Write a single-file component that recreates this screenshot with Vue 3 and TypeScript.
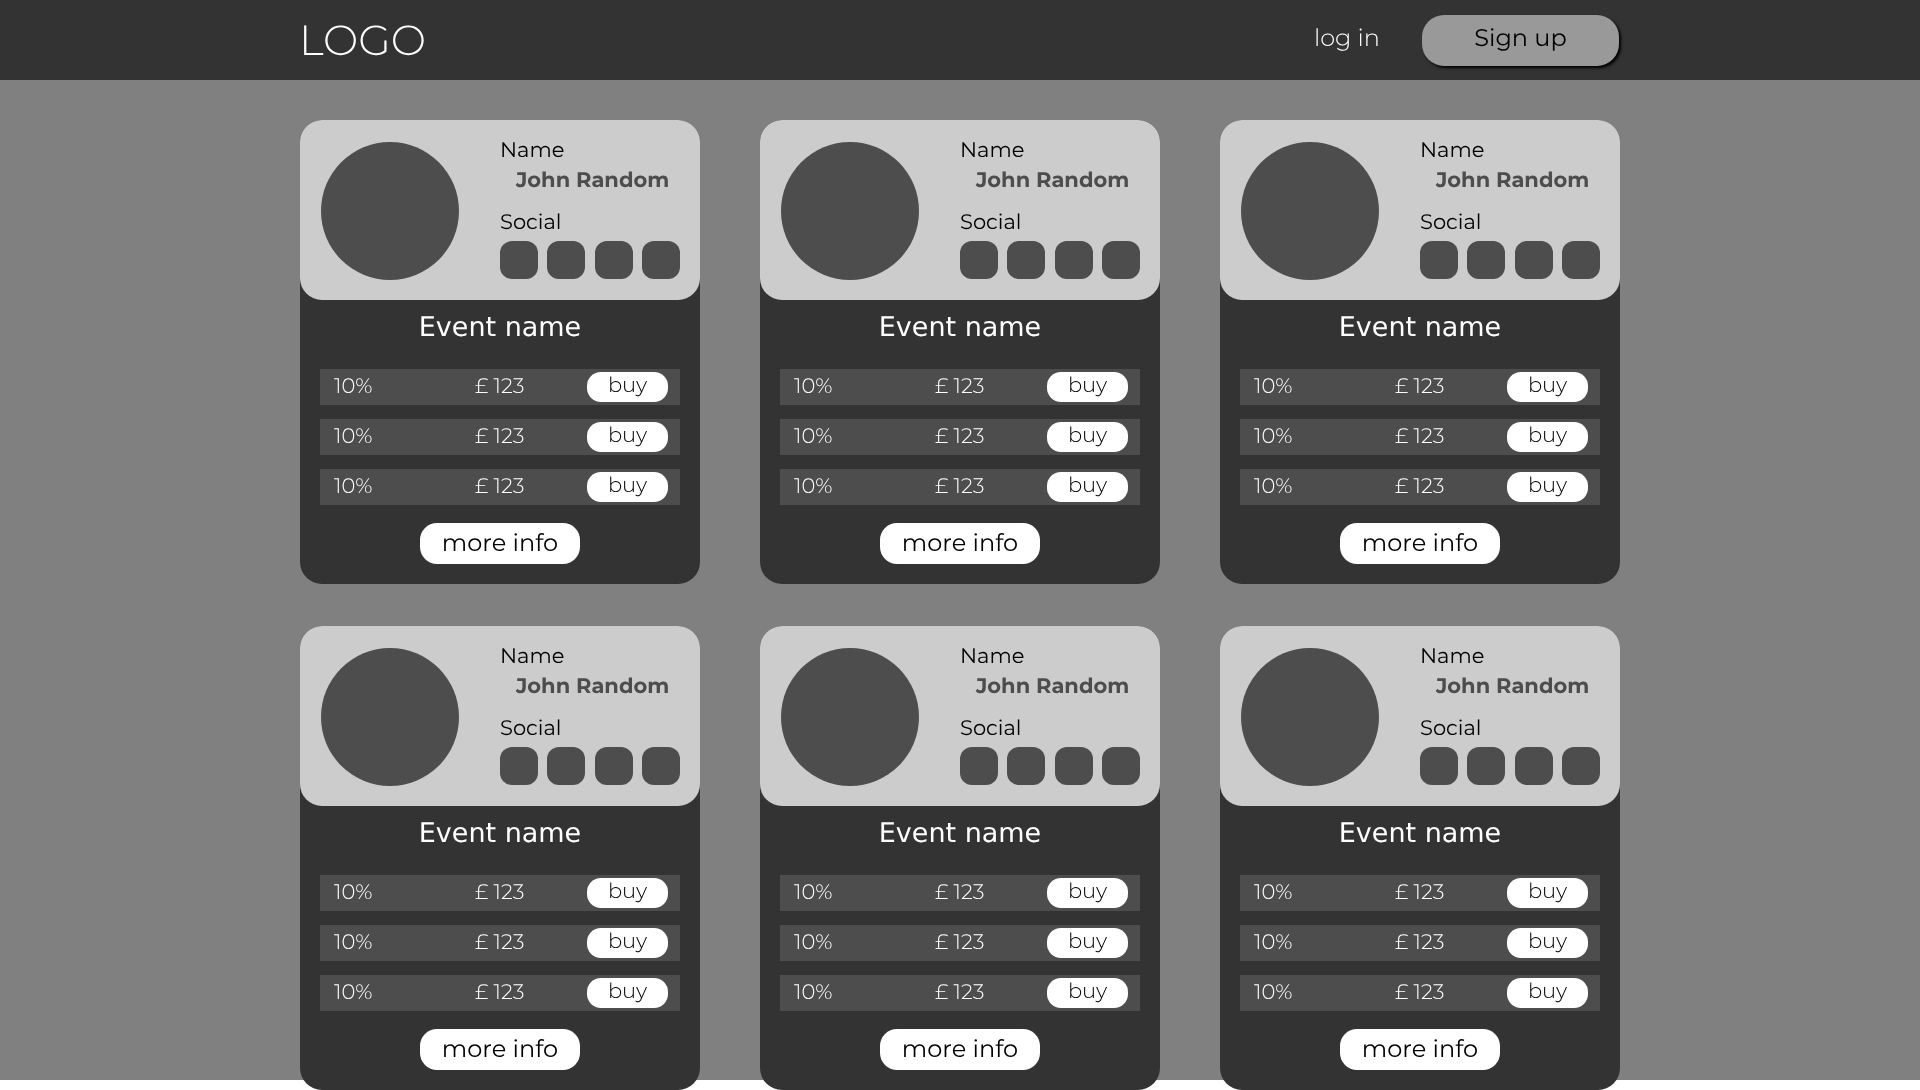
<script setup lang="ts">
interface Offer {
  discount: string
  price: string
}

interface EventCard {
  id: number
  host: string
  title: string
  offers: Offer[]
}

const socialLinks: number[] = [1, 2, 3, 4]

const cards: EventCard[] = Array.from({ length: 6 }, (_, index) => ({
  id: index + 1,
  host: 'John Random',
  title: 'Event name',
  offers: Array.from({ length: 3 }, () => ({ discount: '10%', price: '£ 123' })),
}))
</script>

<template>
  <div class="page">
    <header class="topbar">
      <div class="container topbar-inner">
        <a class="logo" href="#">LOGO</a>
        <nav class="account">
          <a class="login" href="#">log in</a>
          <button class="signup" type="button">Sign up</button>
        </nav>
      </div>
    </header>

    <main class="content">
      <div class="container grid">
        <article v-for="card in cards" :key="card.id" class="card">
          <div class="profile">
            <div class="avatar"></div>
            <div class="details">
              <div class="label">Name</div>
              <div class="host">{{ card.host }}</div>
              <div class="label">Social</div>
              <div class="socials">
                <a v-for="link in socialLinks" :key="link" class="social" href="#"></a>
              </div>
            </div>
          </div>

          <h2 class="title">{{ card.title }}</h2>

          <table class="offers">
            <tbody>
              <tr v-for="(offer, index) in card.offers" :key="index">
                <td class="discount">{{ offer.discount }}</td>
                <td class="price">{{ offer.price }}</td>
                <td class="action"><button class="buy" type="button">buy</button></td>
              </tr>
            </tbody>
          </table>

          <button class="more" type="button">more info</button>
        </article>
      </div>
    </main>
  </div>
</template>

<style>
body {
  margin: 0;
  background: #fff;
}
</style>

<style scoped>
.page {
  font-family: Montserrat, Inter, "Open Sans", sans-serif;
  font-weight: 300;
  text-rendering: geometricPrecision;
  will-change: transform;
}

button {
  padding: 0;
  border: 0;
  font: inherit;
  text-rendering: inherit;
  cursor: pointer;
}

a {
  color: inherit;
  text-decoration: none;
}

.container {
  box-sizing: border-box;
  width: 100%;
  max-width: 1320px;
  margin: 0 auto;
}

.topbar {
  padding-right: 2px;
  background: #333;
  color: #fff;
}

.topbar-inner {
  display: flex;
  align-items: center;
  justify-content: space-between;
  height: 80px;
}

.logo {
  font-size: 42px;
  line-height: 48px;
}

.account {
  display: flex;
  align-items: center;
  gap: 42px;
  font-size: 24px;
}

.login {
  padding-bottom: 3px;
}

.signup {
  width: 197px;
  height: 51px;
  padding-bottom: 3px;
  border-radius: 22px;
  background: #999;
  box-shadow: 2px 2px 3px #000;
  color: #000;
  font-weight: 400;
}

/* The last row of cards hangs over the lower edge of the grey area. */
.content {
  padding-top: 40px;
  background: linear-gradient(#808080, #808080) no-repeat 0 0 / 100% calc(100% - 10px);
}

.grid {
  display: grid;
  grid-template-columns: repeat(auto-fit, 400px);
  justify-content: space-between;
  gap: 42px 60px;
}

.card {
  display: flex;
  flex-direction: column;
  align-items: center;
  padding-bottom: 20px;
  border-radius: 22px;
  background: #333;
  color: #fff;
}

.profile {
  box-sizing: border-box;
  display: flex;
  justify-content: space-between;
  width: 100%;
  height: 180px;
  padding: 17px 20px 20px 21px;
  border-radius: 22px;
  background: #ccc;
}

.avatar {
  width: 138px;
  height: 138px;
  margin-top: 5px;
  border-radius: 50%;
  background: #4d4d4d;
}

.details {
  width: 180px;
  color: #000;
}

.label {
  font-size: 21px;
  font-weight: 400;
  line-height: 28px;
}

.host {
  margin-bottom: 12px;
  padding-left: 16px;
  color: #4d4d4d;
  font-size: 21px;
  font-weight: 700;
  line-height: 32px;
  white-space: nowrap;
}

.socials {
  display: flex;
  justify-content: space-between;
  margin-top: 4px;
}

.social {
  width: 38px;
  height: 38px;
  border-radius: 12px;
  background: #4d4d4d;
}

.title {
  margin: 12px 0 11px;
  font-family: "DejaVu Sans", sans-serif;
  font-size: 27px;
  font-weight: 400;
  line-height: 32px;
}

.offers {
  width: 360px;
  border-spacing: 0 14px;
  table-layout: fixed;
  font-size: 21px;
}

.offers tr {
  background: #4d4d4d;
}

.offers td {
  height: 36px;
  padding: 0;
  line-height: 30px;
}

.offers .discount {
  width: 141px;
  padding-left: 14px;
}

.offers .action {
  width: 94px;
  padding-right: 12px;
  text-align: right;
}

.buy {
  display: block;
  width: 81px;
  height: 30px;
  margin-left: auto;
  padding-bottom: 2px;
  border-radius: 14px;
  background: #fff;
  color: #000;
  line-height: 28px;
}

.more {
  width: 160px;
  height: 41px;
  margin-top: 4px;
  border-radius: 17px;
  background: #fff;
  color: #000;
  font-size: 24px;
  font-weight: 400;
}
</style>
